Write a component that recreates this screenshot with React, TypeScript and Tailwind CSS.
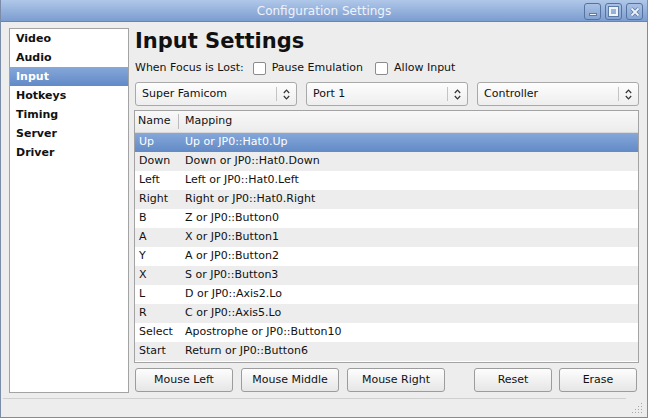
import { useState } from "react"

const sections = ["Video", "Audio", "Input", "Hotkeys", "Timing", "Server", "Driver"]

const mappings: [string, string][] = [
  ["Up", "Up or JP0::Hat0.Up"],
  ["Down", "Down or JP0::Hat0.Down"],
  ["Left", "Left or JP0::Hat0.Left"],
  ["Right", "Right or JP0::Hat0.Right"],
  ["B", "Z or JP0::Button0"],
  ["A", "X or JP0::Button1"],
  ["Y", "A or JP0::Button2"],
  ["X", "S or JP0::Button3"],
  ["L", "D or JP0::Axis2.Lo"],
  ["R", "C or JP0::Axis5.Lo"],
  ["Select", "Apostrophe or JP0::Button10"],
  ["Start", "Return or JP0::Button6"],
]

function Combo({ label }: { label: string }) {
  return (
    <div className="flex-1 h-[24px] flex items-center rounded-[3px] border border-[#a9a9a9] bg-gradient-to-b from-[#fdfdfd] to-[#eeeeee]">
      <span className="flex-1 pl-[6px]">{label}</span>
      <div className="w-px h-[14px] bg-[#c4c4c4]" />
      <div className="w-[19px] flex justify-center">
        <svg width="7" height="11" viewBox="0 0 7 11" fill="none" stroke="#333" strokeWidth="1.2">
          <path d="M0.8 4 L3.5 1.2 L6.2 4" />
          <path d="M0.8 7 L3.5 9.8 L6.2 7" />
        </svg>
      </div>
    </div>
  )
}

function Check({ label, className = "" }: { label: string; className?: string }) {
  return (
    <label className={`flex items-center gap-[6px] ${className}`}>
      <span className="w-[13px] h-[13px] rounded-[2px] border border-[#8c8c8c] bg-white" />
      {label}
    </label>
  )
}

function Btn({ label, w }: { label: string; w: string }) {
  return (
    <button className={`${w} h-[24px] rounded-[3px] border border-[#9c9c9c] bg-gradient-to-b from-[#fdfdfd] to-[#e6e6e6] text-[#111]`}>
      {label}
    </button>
  )
}

function WinBtn({ children }: { children: React.ReactNode }) {
  return (
    <div className="w-[17px] h-[17px] rounded-[3px] border border-[#56739f] bg-gradient-to-b from-[#a9c1e4] to-[#86a4d2] flex items-center justify-center">
      {children}
    </div>
  )
}

export default function App() {
  const [active, setActive] = useState("Input")

  return (
    <div className="w-[648px] h-[418px] flex flex-col bg-[#ededed] border-x border-b border-[#7a8ca8] text-[11px] text-[#111] font-['DejaVu_Sans',sans-serif] overflow-hidden">
      {/* title bar */}
      <div className="h-[22px] shrink-0 relative flex items-center justify-center bg-gradient-to-b from-[#b0c7e8] to-[#7c9dd1] border-b border-[#6784b5] -mx-px">
        <span className="text-[12px] text-[#eef3fa]">Configuration Settings</span>
        <div className="absolute right-[5px] top-[3px] flex gap-[4px]">
          <WinBtn>
            <div className="w-[8px] h-[3px] mt-[5px] bg-[#eef3fa] border border-[#5d7aa6]" />
          </WinBtn>
          <WinBtn>
            <div className="w-[9px] h-[9px] border-2 border-[#eef3fa] outline outline-1 outline-[#5d7aa6]" />
          </WinBtn>
          <WinBtn>
            <svg width="10" height="10" viewBox="0 0 10 10">
              <path d="M1.5 1.5 L8.5 8.5 M8.5 1.5 L1.5 8.5" stroke="#5d7aa6" strokeWidth="3.4" />
              <path d="M1.5 1.5 L8.5 8.5 M8.5 1.5 L1.5 8.5" stroke="#eef3fa" strokeWidth="1.8" />
            </svg>
          </WinBtn>
        </div>
      </div>

      <div className="flex gap-[5px] pl-[8px] pr-[8px] pt-[6px]">
        {/* sidebar */}
        <div className="w-[120px] h-[365px] border border-[#a3a3a3] bg-white font-bold">
          {sections.map((s) => (
            <div
              key={s}
              onClick={() => setActive(s)}
              className={`h-[19px] leading-[19px] pl-[6px] ${
                s === active ? "bg-gradient-to-b from-[#86a8da] to-[#628ac6] text-white" : ""
              }`}
            >
              {s}
            </div>
          ))}
        </div>

        {/* main */}
        <div className="flex-1 flex flex-col">
          <h1 className="text-[21px] font-bold leading-[26px] pl-[1px]">Input Settings</h1>
          <div className="flex items-center h-[18px] mt-[5px] pl-[1px] gap-[9px]">
            <span>When Focus is Lost:</span>
            <Check label="Pause Emulation" />
            <Check label="Allow Input" className="ml-[3px]" />
          </div>
          <div className="flex gap-[9px] mt-[5px] pl-[1px]">
            <Combo label="Super Famicom" />
            <Combo label="Port 1" />
            <Combo label="Controller" />
          </div>

          <div className="mt-[4px] h-[253px] border border-[#a3a3a3] bg-white overflow-hidden">
            <div className="h-[22px] flex items-center bg-gradient-to-b from-[#f8f8f8] to-[#ececec] border-b border-[#d8d8d8]">
              <span className="w-[43px] pl-[3px]">Name</span>
              <div className="w-px h-[15px] bg-[#bcbcbc]" />
              <span className="pl-[6px]">Mapping</span>
            </div>
            {mappings.map(([name, map], i) => (
              <div
                key={name}
                className={`h-[19px] flex items-center ${
                  i === 0
                    ? "bg-gradient-to-b from-[#86a8da] to-[#628ac6] text-white"
                    : i % 2 === 1
                    ? "bg-[#ededed]"
                    : "bg-white"
                }`}
              >
                <span className="w-[50px] pl-[4px]">{name}</span>
                <span>{map}</span>
              </div>
            ))}
          </div>

          <div className="flex mt-[5px] pl-[1px] pr-[2px]">
            <div className="flex gap-[8px]">
              <Btn label="Mouse Left" w="w-[98px]" />
              <Btn label="Mouse Middle" w="w-[98px]" />
              <Btn label="Mouse Right" w="w-[98px]" />
            </div>
            <div className="flex gap-[7px] ml-auto">
              <Btn label="Reset" w="w-[78px]" />
              <Btn label="Erase" w="w-[78px]" />
            </div>
          </div>
        </div>
      </div>

      {/* status bar */}
      <div className="flex-1 relative">
        <div className="mt-[5px] ml-[2px] mr-[21px] h-[2px] border-t border-[#cfcfcf] border-b-white" />
        <svg className="absolute right-[4px] bottom-[4px]" width="11" height="11" viewBox="0 0 11 11" fill="#a8a8a8">
          <rect x="9" y="1" width="1" height="1" />
          <rect x="6" y="4" width="1" height="1" />
          <rect x="9" y="4" width="1" height="1" />
          <rect x="3" y="7" width="1" height="1" />
          <rect x="6" y="7" width="1" height="1" />
          <rect x="9" y="7" width="1" height="1" />
          <rect x="0" y="10" width="1" height="1" />
          <rect x="3" y="10" width="1" height="1" />
          <rect x="6" y="10" width="1" height="1" />
          <rect x="9" y="10" width="1" height="1" />
        </svg>
      </div>
    </div>
  )
}
